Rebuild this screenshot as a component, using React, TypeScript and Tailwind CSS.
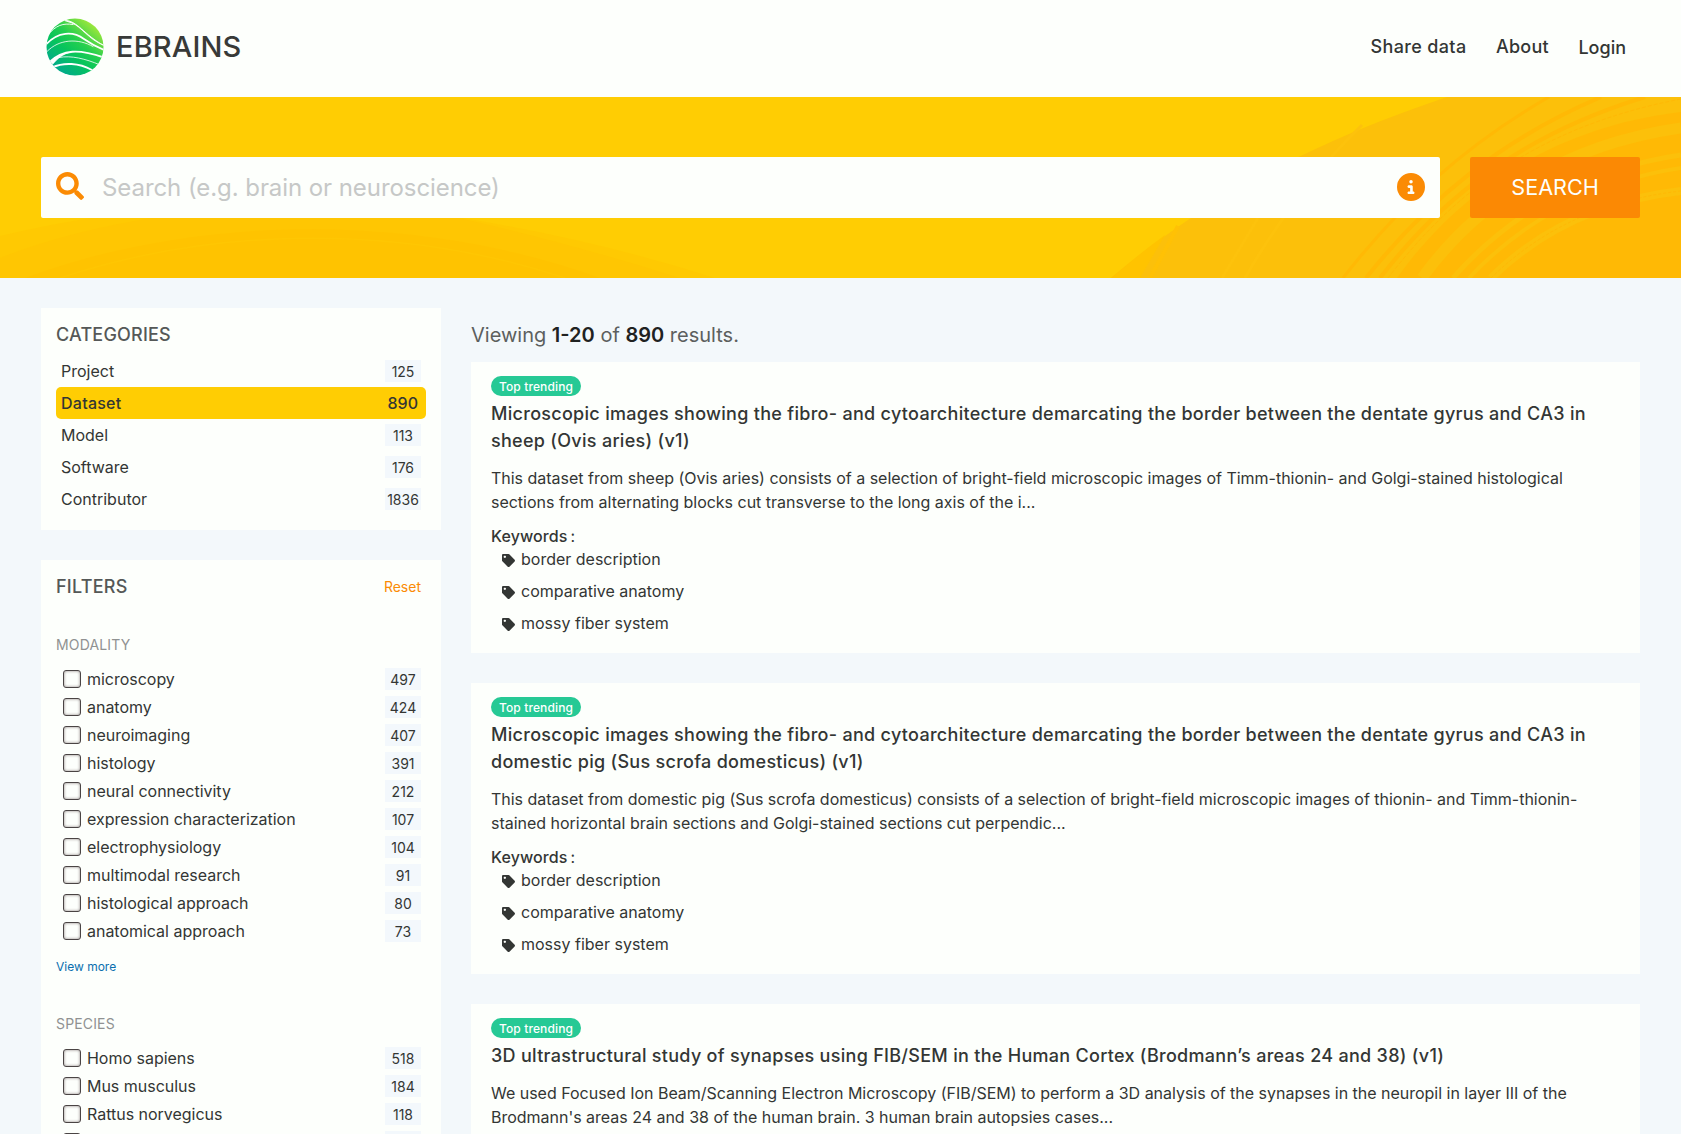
import React from "react";
import { FaSearch, FaTag } from "react-icons/fa";
import { FaCircleInfo } from "react-icons/fa6";

const categories: [string, string][] = [["Project", "125"], ["Dataset", "890"], ["Model", "113"], ["Software", "176"], ["Contributor", "1836"]];
const modality: [string, string][] = [
  ["microscopy", "497"], ["anatomy", "424"], ["neuroimaging", "407"], ["histology", "391"], ["neural connectivity", "212"],
  ["expression characterization", "107"], ["electrophysiology", "104"], ["multimodal research", "91"], ["histological approach", "80"], ["anatomical approach", "73"],
];
const species: [string, string][] = [["Homo sapiens", "518"], ["Mus musculus", "184"], ["Rattus norvegicus", "118"], ["", ""]];
const results = [
  {
    title: "Microscopic images showing the fibro- and cytoarchitecture demarcating the border between the dentate gyrus and CA3 in sheep (Ovis aries) (v1)",
    text: "This dataset from sheep (Ovis aries) consists of a selection of bright-field microscopic images of Timm-thionin- and Golgi-stained histological sections from alternating blocks cut transverse to the long axis of the i...",
    keywords: ["border description", "comparative anatomy", "mossy fiber system"],
  },
  {
    title: "Microscopic images showing the fibro- and cytoarchitecture demarcating the border between the dentate gyrus and CA3 in domestic pig (Sus scrofa domesticus) (v1)",
    text: "This dataset from domestic pig (Sus scrofa domesticus) consists of a selection of bright-field microscopic images of thionin- and Timm-thionin-stained horizontal brain sections and Golgi-stained sections cut perpendic...",
    keywords: ["border description", "comparative anatomy", "mossy fiber system"],
  },
  {
    title: "3D ultrastructural study of synapses using FIB/SEM in the Human Cortex (Brodmann’s areas 24 and 38) (v1)",
    text: "We used Focused Ion Beam/Scanning Electron Microscopy (FIB/SEM) to perform a 3D analysis of the synapses in the neuropil in layer III of the Brodmann's areas 24 and 38 of the human brain. 3 human brain autopsies cases...",
    keywords: [],
  },
];

function Logo() {
  return (
    <svg width="58" height="58" viewBox="0 0 58 58">
      <defs>
        <linearGradient id="g" x1="0.15" y1="0.95" x2="0.85" y2="0.1">
          <stop offset="0" stopColor="#00a595" />
          <stop offset="0.4" stopColor="#07c45c" />
          <stop offset="0.62" stopColor="#25cf4e" />
          <stop offset="1" stopColor="#a6e93a" />
        </linearGradient>
        <clipPath id="c"><circle cx="29" cy="29" r="28.5" /></clipPath>
      </defs>
      <g clipPath="url(#c)" fill="none" stroke="#fff" strokeLinecap="round">
        <rect width="58" height="58" fill="url(#g)" stroke="none" />
        <path d="M19 2.5C31 2 38 17 58 27.5C42 21 36 9 26 5Z" fill="#fff" strokeWidth="0.9" />
        <path d="M2 17C10 7 17 5 27 6.5" strokeWidth="0.9" />
        <path d="M0 26.5C12 13.5 27 13 38 21C45 26 51 29 58 32" strokeWidth="1.7" />
        <path d="M1 33.5C13 21 32 20 47 28.5" strokeWidth="0.8" />
        <path d="M3 44.5C17 31 33 31 58 39.5" strokeWidth="1.9" />
        <path d="M3 45C10 38 17 36 23 34.5C16 37 12 40 7 46Z" fill="#fff" strokeWidth="0.6" />
        <path d="M13 39.5C25 37 40 41 53 46.5" strokeWidth="0.8" />
        <path d="M6 49.5C18 44 33 45 46 52" strokeWidth="1.9" />
      </g>
    </svg>
  );
}

function HeroWaves() {
  return (
    <svg className="absolute inset-0" width="1681" height="181" viewBox="0 97 1681 181" fill="none">
      <path d="M0 236Q55 223 105 216L450 216Q590 238 715 278H0Z" fill="#ffc902" />
      <path d="M0 258Q70 230 165 216L450 216Q560 240 680 278H0Z" fill="#ffc602" />
      <path d="M25 278C200 213 420 213 600 278Z" fill="#ffc300" />
      <path d="M60 278C220 225 405 225 565 278" stroke="#ffc602" strokeWidth="1.5" />
      <path d="M1111 278C1213 192 1325 138 1447 97H1681V278Z" fill="#fcc00a" />
      <path d="M1111 278C1130 262 1147 248 1165 235L1140 278Z" fill="#ffc300" />
      <g stroke="#fdc20c">
        <path d="M1222 278L1258 218" strokeWidth="3" />
        <path d="M1245 278C1275 225 1320 165 1362 125" strokeWidth="3" />
        <path d="M1150 278L1178 226" strokeWidth="4" stroke="#ffc105" />
      </g>
      <g stroke="#ffb905">
        <path d="M1343 278C1400 205 1465 145 1549 97" strokeWidth="3" />
        <path d="M1366 278C1428 200 1500 140 1601 97" strokeWidth="4" />
        <path d="M1380 278C1440 200 1520 135 1645 97" strokeWidth="4" />
        <path d="M1388 278C1448 200 1530 128 1681 99" strokeWidth="1" strokeDasharray="4 2" />
      </g>
      <path d="M1397 278C1452 200 1545 128 1681 112V278Z" fill="#ffb905" />
      <g stroke="#fcc00a">
        <path d="M1422 278C1475 205 1560 145 1681 128" strokeWidth="11" />
        <path d="M1453 278C1510 213 1590 168 1681 155" strokeWidth="5" />
        <path d="M1469 278C1525 218 1600 180 1681 168" strokeWidth="4" />
        <path d="M1491 278C1545 225 1610 199 1681 191" strokeWidth="8" />
      </g>
      <path d="M1491 278C1545 225 1610 199 1681 191" stroke="#ffb905" strokeDasharray="3 2" />
    </svg>
  );
}

function Count({ value }: { value: string }) {
  return <span className="flex h-[22px] w-9 items-center justify-center bg-[#f3f8fc] pt-px text-[14px]">{value}</span>;
}

function Facet({ name, items }: { name: string; items: [string, string][] }) {
  return (
    <section>
      <h4 className="pt-px text-[14px] leading-5 tracking-[0.15px] text-[#909292]">{name}</h4>
      <div className="mt-[10px]">
        {items.map(([label, n]) => (
          <div key={label} className="flex h-7 items-center pr-[5px]">
            <span className="ml-[7px] h-[18px] w-[18px] rounded-[3px] border border-[#4a4444] shadow-[inset_0_0_3px_#8a7f7f]" />
            <span className="ml-[6px] flex-1 text-base tracking-[-0.02px]">{label}</span>
            <Count value={n} />
          </div>
        ))}
      </div>
    </section>
  );
}

export default function App() {
  return (
    <div className="h-[1134px] overflow-hidden bg-[#f3f8fb] font-['Inter',sans-serif] text-[#333634]">
      <header className="flex h-[97px] items-center bg-[#fdfffc] pl-[46px] pr-[55px]">
        <div className="mb-[3px] flex items-center">
          <Logo />
          <span className="ml-3 text-[29px] font-medium tracking-[0.15px] text-[#383a38]">EBRAINS</span>
        </div>
        <nav className="mb-1 ml-auto flex items-center gap-[29.5px] text-lg font-medium">
          <span className="tracking-[0.35px]">Share data</span>
          <span className="tracking-[0.25px]">About</span>
          <span className="mt-[2px]">Login</span>
        </nav>
      </header>
      <div className="relative flex h-[181px] items-center gap-[30px] bg-[#ffcd03] px-[41px]">
        <HeroWaves />
        <div className="relative flex h-[61px] w-[1400px] items-center rounded-[2px] bg-[#fdfffc] px-[15px]">
          <FaSearch className="mb-[3px] text-[28px] text-[#fb8b04]" />
          <span className="ml-[18px] flex-1 text-2xl tracking-[-0.07px] text-[#c6c8c7]">Search (e.g. brain or neuroscience)</span>
          <FaCircleInfo className="mb-px text-[28px] text-[#fb8b04]" />
        </div>
        <div className="relative flex h-[61px] w-[170px] items-center justify-center rounded-[2px] bg-[#fb8904] text-[21.6px] text-[#fdfffc]">SEARCH</div>
      </div>
      <main className="flex gap-[30px] px-[41px] pt-[30px]">
        <aside className="w-[400px] shrink-0">
          <section className="h-[222px] bg-[#fdfffc] px-[15px] pt-[13px]">
            <h3 className="mb-[7px] text-lg leading-[27px] font-medium tracking-[0.2px] text-[#555857]">CATEGORIES</h3>
            {categories.map(([label, n]) =>
              label === "Dataset" ? (
                <div key={label} className="flex h-8 items-center justify-between rounded-[5px] bg-[#ffcd03] pl-[5px] pr-2 font-medium">
                  <span className="tracking-[0.25px]">{label}</span><span>{n}</span>
                </div>
              ) : (
                <div key={label} className="flex h-8 items-center justify-between px-[5px]">
                  <span>{label}</span><Count value={n} />
                </div>
              )
            )}
          </section>
          <section className="mt-[30px] h-[700px] bg-[#fdfffc] px-[15px] pt-[13px]">
            <div className="mb-[34px] flex items-center justify-between pr-[5px]">
              <h3 className="text-lg leading-[27px] font-medium tracking-[0.25px] text-[#555857]">FILTERS</h3>
              <span className="text-[14px] text-[#fb8b04]">Reset</span>
            </div>
            <Facet name="MODALITY" items={modality} />
            <div className="mt-[13px] mb-[37px] text-[12px] leading-[18px] text-[#0b6fae]">View more</div>
            <Facet name="SPECIES" items={species} />
          </section>
        </aside>
        <div className="flex-1">
          <div className="mt-3 mb-3 text-xl leading-[30px] text-[#5c5f5e]">
            Viewing <b className="font-semibold text-[#1f2221]">1-20</b> of <b className="font-semibold text-[#1f2221]">890</b> results.
          </div>
          {results.map((r) => (
            <article key={r.title} className="mb-[30px] h-[291px] bg-[#fdfffc] px-5 pt-[14px]">
              <span className="flex h-5 w-[90px] items-center justify-center rounded-full bg-[#26c995] pt-px text-[12px] font-medium tracking-[0.12px] text-white">Top trending</span>
              <h2 className="mt-1 text-lg leading-[27px] font-medium tracking-[0.29px]">{r.title}</h2>
              <p className="mt-3 text-base leading-6 tracking-[-0.015px]">{r.text}</p>
              {r.keywords.length > 0 && (
                <>
                  <div className="mt-[10px] mb-[-1px] flex gap-[3px] text-base leading-6"><span className="font-medium tracking-[0.1px]">Keywords</span>:</div>
                  {r.keywords.map((k) => (
                    <div key={k} className="mb-2 flex items-center gap-[6px] pl-[11px] text-base leading-6">
                      <FaTag className="mt-[2px] text-[13px]" />{k}
                    </div>
                  ))}
                </>
              )}
            </article>
          ))}
        </div>
      </main>
    </div>
  );
}
